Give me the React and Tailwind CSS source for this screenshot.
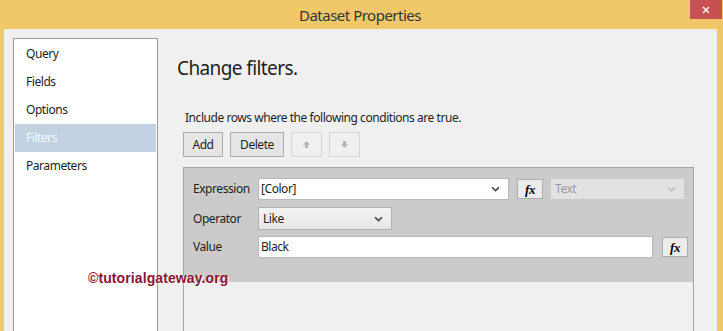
import React from 'react';

const font = { fontFamily: '"Segoe UI", "Noto Sans", "Open Sans", sans-serif' };

function Chevron({ className = '' }) {
  return (
    <svg width="9" height="6" viewBox="0 0 9 6" className={className}>
      <path d="M1 1.2 L4.5 4.6 L8 1.2" fill="none" stroke="currentColor" strokeWidth="1.6" />
    </svg>
  );
}

function FxButton() {
  return (
    <div className="w-[26px] h-[20px] bg-[#ececec] border border-[#adadad] flex items-center justify-center">
      <span className="italic font-bold text-[13px] leading-none text-black" style={{ fontFamily: '"Liberation Serif", serif' }}>
        fx
      </span>
    </div>
  );
}

function ArrowBtn({ up }) {
  return (
    <div className="w-[31px] h-[25px] border border-[#d6d6d6] bg-[#f0f0f0] flex items-center justify-center">
      <svg width="9" height="9" viewBox="0 0 9 9" className="text-[#b4b4b4]">
        {up ? (
          <path d="M4.5 1 L8 4.8 L6 4.8 L6 8 L3 8 L3 4.8 L1 4.8 Z" fill="currentColor" />
        ) : (
          <path d="M4.5 8 L8 4.2 L6 4.2 L6 1 L3 1 L3 4.2 L1 4.2 Z" fill="currentColor" />
        )}
      </svg>
    </div>
  );
}

export default function App() {
  const items = ['Query', 'Fields', 'Options', 'Filters', 'Parameters'];
  return (
    <div className="relative w-[723px] h-[331px] overflow-hidden bg-[#f0c86a] flex flex-col text-[#1e1e1e] tracking-[-0.45px]" style={font}>
      {/* Title bar */}
      <div className="relative h-[29px] shrink-0 flex items-center justify-center">
        <span className="text-[15px] text-[#333] mt-[1px] ml-[-3px] tracking-[-0.5px]">Dataset Properties</span>
        <div className="absolute top-0 right-[1px] w-[32px] h-[19px] bg-[#c75050] flex items-center justify-center">
          <svg width="8" height="8" viewBox="0 0 8 8">
            <path d="M1 1 L7 7 M7 1 L1 7" stroke="#fff" strokeWidth="1.4" />
          </svg>
        </div>
      </div>

      {/* Body */}
      <div className="flex-1 ml-[4px] mr-[6px] bg-[#f0f0f0] flex pt-[9px] pl-[9px]">
        {/* Left nav */}
        <div className="w-[145px] shrink-0 bg-white border border-[#9a9a9a] border-b-0 pt-[1px] px-[1px]">
          {items.map((it) => (
            <div
              key={it}
              className={`h-[28px] flex items-center pl-[11px] text-[12px] ${
                it === 'Filters' ? 'bg-[#c3d2e2] text-[#f4f7fb]' : 'text-[#1e1e1e]'
              }`}
            >
              {it}
            </div>
          ))}
        </div>

        {/* Right pane */}
        <div className="flex-1 flex flex-col pl-[24px]">
          <div className="text-[19px] leading-none ml-[-5px] mt-[21px] text-[#1e1e1e] tracking-[-0.6px]">Change filters.</div>
          <div className="text-[12px] mt-[31px] ml-[3px] text-[#1e1e1e]">Include rows where the following conditions are true.</div>
          <div className="flex gap-[7px] mt-[5px] ml-[1px]">
            <div className="h-[25px] w-[40px] border border-[#acacac] bg-[#e5e5e5] text-[12px] flex items-center justify-center">Add</div>
            <div className="h-[25px] w-[54px] border border-[#acacac] bg-[#e5e5e5] text-[12px] flex items-center justify-center">Delete</div>
            <ArrowBtn up />
            <ArrowBtn />
          </div>

          {/* Filter list */}
          <div className="mt-[10px] ml-[1px] w-[511px] flex-1 border-l border-t border-r border-[#a5a5a5] flex flex-col">
            <div className="h-[114px] bg-[#cbcbcb] pl-[9px] pr-[4px] pt-[10px] flex flex-col text-[12px]">
              <div className="flex items-center h-[22px]">
                <div className="w-[65px] shrink-0">Expression</div>
                <div className="w-[251px] h-[22px] bg-white border border-[#b9b9b9] flex items-center justify-between pl-[2px] pr-[8px]">
                  <span>[Color]</span>
                  <Chevron className="text-[#444]" />
                </div>
                <div className="ml-[8px]"><FxButton /></div>
                <div className="ml-[8px] w-[133px] h-[20px] bg-[#e2e2e2] flex items-center justify-between pl-[4px] pr-[8px] text-[#9a9a9a]">
                  <span>Text</span>
                  <Chevron className="text-[#c0c0c0]" />
                </div>
              </div>
              <div className="flex items-center h-[23px] mt-[7px]">
                <div className="w-[65px] shrink-0">Operator</div>
                <div className="w-[134px] h-[23px] bg-gradient-to-b from-[#f4f4f4] to-[#e6e6e6] border border-[#b0b0b0] flex items-center justify-between pl-[4px] pr-[8px]">
                  <span>Like</span>
                  <Chevron className="text-[#444]" />
                </div>
              </div>
              <div className="flex items-center h-[22px] mt-[6px]">
                <div className="w-[65px] shrink-0">Value</div>
                <div className="w-[395px] shrink-0 h-[22px] bg-white border border-[#b9b9b9] flex items-center pl-[2px]">
                  <span>Black</span>
                </div>
                <div className="ml-[9px] shrink-0"><FxButton /></div>
              </div>
            </div>
          </div>
        </div>
      </div>

      {/* Watermark */}
      <div
        className="absolute left-[88px] top-[268px] text-[14px] font-bold text-[#8b1538] tracking-[0.1px]"
        style={{ fontFamily: '"Liberation Sans", Arial, sans-serif', textShadow: '1px 1px 0 #fff' }}
      >
        ©tutorialgateway.org
      </div>
    </div>
  );
}
